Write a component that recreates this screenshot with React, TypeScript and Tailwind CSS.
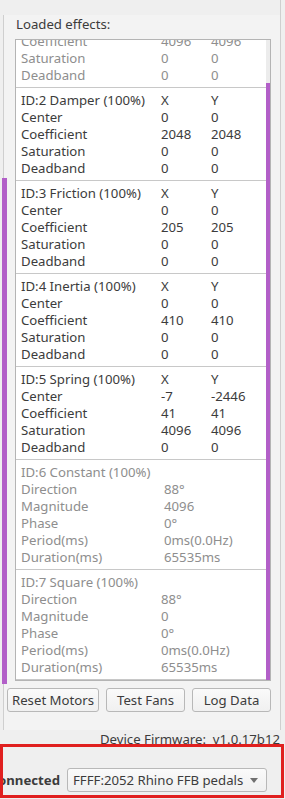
type Row = [string, string, string?];

type Effect = {
  title: string;
  active: boolean;
  axis: boolean;
  rows: Row[];
};

const effects: Effect[] = [
  {
    title: "ID:1 Spring (100%)",
    active: false,
    axis: true,
    rows: [
      ["Center", "0", "0"],
      ["Coefficient", "4096", "4096"],
      ["Saturation", "0", "0"],
      ["Deadband", "0", "0"],
    ],
  },
  {
    title: "ID:2 Damper (100%)",
    active: true,
    axis: true,
    rows: [
      ["Center", "0", "0"],
      ["Coefficient", "2048", "2048"],
      ["Saturation", "0", "0"],
      ["Deadband", "0", "0"],
    ],
  },
  {
    title: "ID:3 Friction (100%)",
    active: true,
    axis: true,
    rows: [
      ["Center", "0", "0"],
      ["Coefficient", "205", "205"],
      ["Saturation", "0", "0"],
      ["Deadband", "0", "0"],
    ],
  },
  {
    title: "ID:4 Inertia (100%)",
    active: true,
    axis: true,
    rows: [
      ["Center", "0", "0"],
      ["Coefficient", "410", "410"],
      ["Saturation", "0", "0"],
      ["Deadband", "0", "0"],
    ],
  },
  {
    title: "ID:5 Spring (100%)",
    active: true,
    axis: true,
    rows: [
      ["Center", "-7", "-2446"],
      ["Coefficient", "41", "41"],
      ["Saturation", "4096", "4096"],
      ["Deadband", "0", "0"],
    ],
  },
  {
    title: "ID:6 Constant (100%)",
    active: false,
    axis: false,
    rows: [
      ["Direction", "88°"],
      ["Magnitude", "4096"],
      ["Phase", "0°"],
      ["Period(ms)", "0ms(0.0Hz)"],
      ["Duration(ms)", "65535ms"],
    ],
  },
  {
    title: "ID:7 Square (100%)",
    active: false,
    axis: false,
    rows: [
      ["Direction", "88°"],
      ["Magnitude", "0"],
      ["Phase", "0°"],
      ["Period(ms)", "0ms(0.0Hz)"],
      ["Duration(ms)", "65535ms"],
    ],
  },
];

const EffectBlock = ({ effect, wide }: { effect: Effect; wide: boolean }) => {
  const color = effect.active ? "text-[#3c3c3c]" : "text-[#8e8e8e]";
  const labelW = wide ? "w-[143px]" : "w-[140px]";
  return (
    <div className={`pl-[5px] pt-[4px] pb-[3px] border-b border-[#c8c8c8] ${color}`}>
      <div className="flex h-[17px]">
        <span className={effect.axis ? "w-[140px]" : "whitespace-nowrap"}>{effect.title}</span>
        {effect.axis && (
          <>
            <span className="w-[50px]">X</span>
            <span>Y</span>
          </>
        )}
      </div>
      {effect.rows.map(([label, x, y]) => (
        <div key={label} className="flex h-[17px]">
          <span className={effect.axis ? "w-[140px]" : labelW}>{label}</span>
          <span className="w-[50px] whitespace-nowrap">{x}</span>
          {y !== undefined && <span>{y}</span>}
        </div>
      ))}
    </div>
  );
};

const Btn = ({ label, w }: { label: string; w: string }) => (
  <button
    className={`${w} h-[24px] rounded-[3px] border border-[#b8b8b8] bg-gradient-to-b from-[#fafafa] to-[#f0f0f0] text-[#3c3c3c] leading-[22px] text-center`}
  >
    {label}
  </button>
);

export default function App() {
  return (
    <div
      className="relative w-[285px] h-[799px] overflow-hidden bg-[#efefef] text-[13.2px] leading-[17px] text-[#3c3c3c]"
      style={{ fontFamily: '"Noto Sans", "Open Sans", sans-serif' }}
    >
      {/* group panel */}
      <div className="w-[281px] h-[730px] border-r border-[#cfcfcf] pt-[15px]">
        <div className="ml-[3px] h-[715px] border-l border-[#cfcfcf] bg-[#f3f3f3]">
          <div className="h-[24px] pl-[12px] pt-[1px]">Loaded effects:</div>

          <div className="ml-[11px] w-[256px] h-[642px] border border-[#b4b4b4] bg-white flex">
            <div className="flex-1 overflow-hidden">
              <div className="mt-[-45px]">
                {effects.map((e) => (
                  <EffectBlock key={e.title} effect={e} wide={e.title.startsWith("ID:6")} />
                ))}
              </div>
            </div>
            <div className="w-[4px] bg-[#ececec] flex flex-col">
              <div className="h-[43px]" />
              <div className="flex-1 bg-[#b25fc8]" />
            </div>
          </div>

          <div className="flex gap-[7px] pl-[3px] mt-[7px]">
            <Btn label="Reset Motors" w="w-[92px]" />
            <Btn label="Test Fans" w="w-[79px]" />
            <Btn label="Log Data" w="w-[79px]" />
          </div>
        </div>
      </div>

      {/* firmware */}
      <div className="h-[20px] pt-[1px] pr-[5px] text-right whitespace-nowrap">
        Device Firmware:&nbsp; v1.0.17b12
      </div>

      {/* connection row */}
      <div className="mt-[18px] flex items-center h-[24px]">
        <div className="w-[60px] overflow-hidden flex justify-end">
          <span className="font-bold whitespace-nowrap">Connected</span>
        </div>
        <div className="ml-[7px] w-[200px] h-[24px] rounded-[3px] border border-[#b8b8b8] bg-gradient-to-b from-[#fafafa] to-[#f0f0f0] flex items-center pl-[5px] pr-[8px]">
          <span className="flex-1 whitespace-nowrap">FFFF:2052 Rhino FFB pedals</span>
          <svg width="8" height="5" viewBox="0 0 8 5" className="text-[#707070]">
            <path d="M0 0 L8 0 L4 5 Z" fill="currentColor" />
          </svg>
        </div>
      </div>

      {/* outer scrollbar thumb on left edge */}
      <div className="absolute left-[2px] top-[178px] w-[5px] h-[506px] bg-[#b25fc8]" />

      {/* red highlight annotation */}
      <div className="absolute left-0 top-[744px] w-[284px] h-[54px] border-[3px] border-[#e0201f]" />
    </div>
  );
}
